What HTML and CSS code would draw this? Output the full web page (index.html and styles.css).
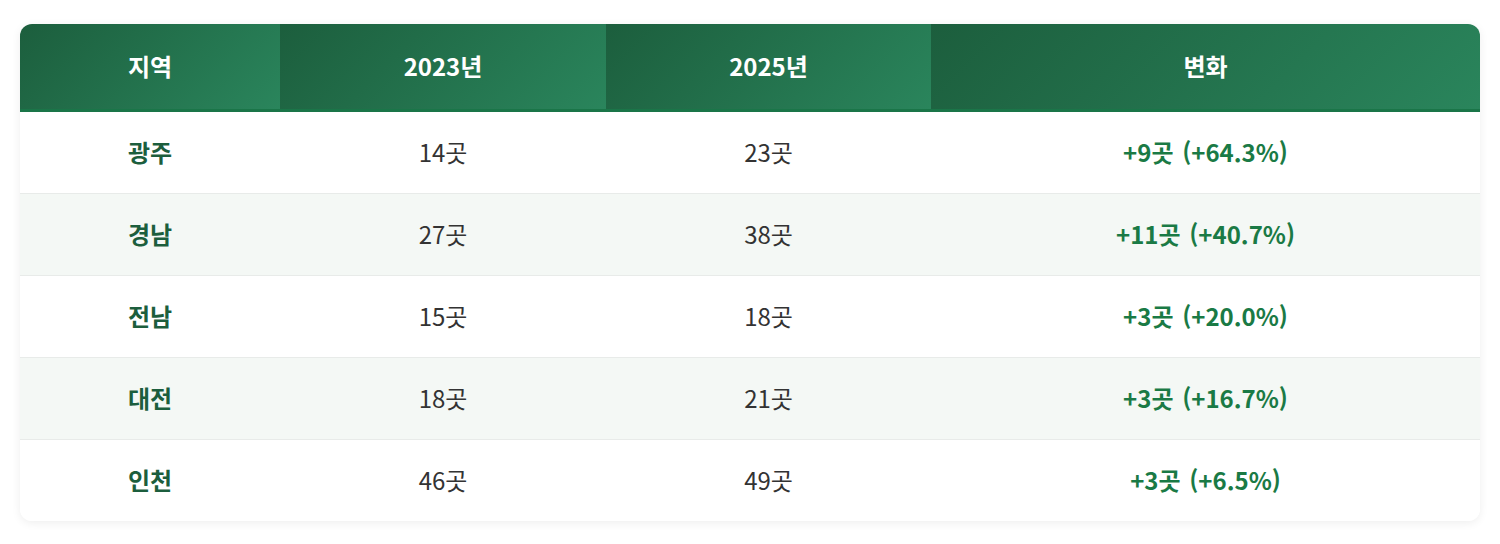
FILE: index.html
```html
<!DOCTYPE html>
<html lang="ko">
<head>
<meta charset="utf-8">
<link rel="stylesheet" href="styles.css">
</head>
<body>
<div class="wrap">
  <table class="tbl">
    <colgroup>
      <col class="c1"><col class="c2"><col class="c3"><col class="c4">
    </colgroup>
    <thead>
      <tr><th>지역</th><th>2023년</th><th>2025년</th><th>변화</th></tr>
    </thead>
    <tbody>
      <tr><td class="region">광주</td><td>14곳</td><td>23곳</td><td class="change">+9곳 (+64.3%)</td></tr>
      <tr><td class="region">경남</td><td>27곳</td><td>38곳</td><td class="change">+11곳 (+40.7%)</td></tr>
      <tr><td class="region">전남</td><td>15곳</td><td>18곳</td><td class="change">+3곳 (+20.0%)</td></tr>
      <tr><td class="region">대전</td><td>18곳</td><td>21곳</td><td class="change">+3곳 (+16.7%)</td></tr>
      <tr><td class="region">인천</td><td>46곳</td><td>49곳</td><td class="change">+3곳 (+6.5%)</td></tr>
    </tbody>
  </table>
</div>
</body>
</html>
```
FILE: styles.css
```css
html, body { margin: 0; padding: 0; background: #fff; }
body {
  font-family: "Noto Sans CJK KR", "Noto Sans", sans-serif;
  color: #333;
}
.wrap { padding: 24px 20px; }
.tbl {
  width: 1460px;
  border-collapse: separate;
  border-spacing: 0;
  border-radius: 12px;
  overflow: hidden;
  box-shadow: 0 2px 10px rgba(0,0,0,0.07);
  table-layout: fixed;
}
.c1 { width: 260px; }
.c2 { width: 326px; }
.c3 { width: 325px; }
.c4 { width: 549px; }
th {
  background: linear-gradient(135deg, #1c5e3d 0%, #2a855c 100%);
  color: #fff;
  font-weight: 700;
  font-size: 24px;
  line-height: 1.2;
  height: 85px;
  padding: 0;
  border-bottom: 3px solid #1a7548;
  text-align: center;
}
td {
  height: 81px;
  padding: 0;
  text-align: center;
  font-size: 24px;
  line-height: 1.2;
  border-bottom: 1px solid #e8ebe9;
  background: #fff;
}
tbody tr:nth-child(even) td { background: #f4f8f5; }
tbody tr:last-child td { border-bottom: none; }
.region { color: #1c5e3d; font-weight: 700; }
.change { color: #1a7a45; font-weight: 700; word-spacing: 2px; }
```
